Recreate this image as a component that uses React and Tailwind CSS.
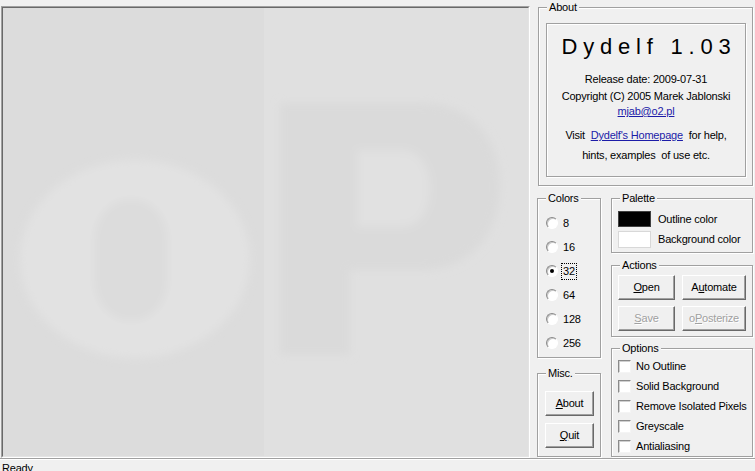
import clsx from 'clsx'

const font = "font-['Liberation_Sans',Arial,sans-serif]"

function GroupBox({ title, className, children }) {
  return (
    <div className={clsx('relative border border-[#a0a0a0] shadow-[1px_1px_0_#fff,inset_1px_1px_0_#fff]', className)}>
      <span className="absolute -top-[7px] left-[8px] px-[2px] bg-[#f0f0f0] leading-[13px]">{title}</span>
      {children}
    </div>
  )
}

function Button({ children, disabled, className }) {
  return (
    <div
      className={clsx(
        'flex items-center justify-center border border-t-white border-l-white border-r-[#696969] border-b-[#696969] shadow-[inset_-1px_-1px_0_#a0a0a0]',
        disabled ? 'text-[#a0a0a0] [text-shadow:1px_1px_0_#fff]' : 'text-black',
        className
      )}
    >
      {children}
    </div>
  )
}

function Key({ children }) {
  return <span className="underline underline-offset-[1px]">{children}</span>
}

function Radio({ label, checked }) {
  return (
    <div className="flex h-[24px] items-center gap-[5px] pl-[8px]">
      <span className="relative flex h-[12px] w-[12px] items-center justify-center rounded-full border border-t-[#8a8a8a] border-l-[#8a8a8a] border-r-white border-b-white bg-white shadow-[inset_1px_1px_0_#c8c8c8]">
        {checked && <span className="h-[4px] w-[4px] rounded-full bg-black" />}
      </span>
      <span className={clsx('leading-[13px]', checked && 'outline-1 outline-dotted outline-black outline-offset-[1px]')}>
        {label}
      </span>
    </div>
  )
}

function Check({ label }) {
  return (
    <div className="flex h-[20px] items-center gap-[5px] pl-[6px]">
      <span className="h-[13px] w-[13px] border border-t-[#8a8a8a] border-l-[#8a8a8a] border-r-[#f4f4f4] border-b-[#f4f4f4] bg-white shadow-[inset_1px_1px_0_#d0d0d0]" />
      <span className="leading-[13px]">{label}</span>
    </div>
  )
}

// preview of the posterized image: faint "oP" letters on two tinted halves
function Canvas() {
  return (
    <div className="h-[452px] w-[529px] border border-t-[#a0a0a0] border-l-[#a0a0a0] border-r-white border-b-white">
      <div className="h-full w-full border border-t-[#696969] border-l-[#696969] border-r-[#e3e3e3] border-b-[#e3e3e3]">
        <svg width="525" height="448" viewBox="0 0 525 448" className="block">
          <defs>
            <filter id="soft" x="-20%" y="-20%" width="140%" height="140%">
              <feGaussianBlur stdDeviation="4" />
            </filter>
          </defs>
          <rect x="0" y="0" width="261" height="448" fill="#dcdcdc" />
          <rect x="261" y="0" width="264" height="448" fill="#e0e0e0" />
          <g filter="url(#soft)">
            <ellipse cx="132" cy="251" rx="115" ry="99" fill="#e2e2e2" />
            <rect x="92" y="192" width="72" height="120" rx="34" ry="40" fill="#dcdcdc" />
          </g>
          <g filter="url(#soft)">
            <path d="M277 95 H420 C468 95 497 130 497 178 C497 228 466 262 420 262 H347 V347 H277 Z" fill="#dadada" />
            <path d="M354 142 H398 C418 142 427 160 427 180 C427 201 418 219 398 219 H354 Z" fill="#e1e1e1" />
          </g>
        </svg>
      </div>
    </div>
  )
}

export default function App() {
  return (
    <div className={clsx('flex h-[471px] w-[755px] flex-col overflow-hidden bg-[#f0f0f0] text-[11px] tracking-[-0.2px] text-black', font)}>
      <div className="flex h-[460px]">
        <div className="pl-[1px] pt-[6px]">
          <Canvas />
        </div>

        <div className="ml-[7px] flex w-[216px] flex-col">
          {/* about */}
          <GroupBox title="About" className="ml-[1px] mt-[7px] h-[179px] w-[215px]">
            <div className="ml-[7px] mt-[15px] flex h-[154px] w-[200px] flex-col items-center border border-[#a0a0a0] shadow-[inset_1px_1px_0_#fff,1px_1px_0_#fff]">
              <div className="mt-[10px] pl-[6px] text-[22px] leading-[26px] tracking-[5.8px]">Dydelf 1.03</div>
              <div className="mt-[13px] leading-[13px]">Release date: 2009-07-31</div>
              <div className="mt-[4px] leading-[13px]">Copyright (C) 2005 Marek Jablonski</div>
              <div className="mt-[2px] leading-[13px] text-[#1c1ca8] underline underline-offset-[1px]">mjab@o2.pl</div>
              <div className="mt-[11px] whitespace-pre leading-[13px]">
                {'Visit  '}
                <span className="text-[#1c1ca8] underline underline-offset-[1px]">Dydelf's Homepage</span>
                {'  for help,'}
              </div>
              <div className="mt-[7px] whitespace-pre leading-[13px]">{'hints, examples  of use etc.'}</div>
            </div>
          </GroupBox>

          <div className="mt-[12px] flex gap-[10px]">
            <div className="flex w-[64px] flex-col">
              <GroupBox title="Colors" className="h-[160px]">
                <div className="flex flex-col pt-[12px]">
                  <Radio label="8" />
                  <Radio label="16" />
                  <Radio label="32" checked />
                  <Radio label="64" />
                  <Radio label="128" />
                  <Radio label="256" />
                </div>
              </GroupBox>

              <GroupBox title="Misc." className="mt-[15px] h-[84px]">
                <div className="flex flex-col gap-[7px] pl-[7px] pt-[17px]">
                  <Button className="h-[25px] w-[49px]"><span><Key>A</Key>bout</span></Button>
                  <Button className="h-[25px] w-[49px]"><span><Key>Q</Key>uit</span></Button>
                </div>
              </GroupBox>
            </div>

            <div className="flex w-[142px] flex-col">
              <GroupBox title="Palette" className="h-[55px]">
                <div className="flex flex-col gap-[4px] px-[6px] pt-[12px]">
                  <div className="flex items-center gap-[7px]">
                    <span className="h-[16px] w-[33px] border border-[#404040] bg-black" />
                    <span className="leading-[13px]">Outline color</span>
                  </div>
                  <div className="flex items-center gap-[7px]">
                    <span className="h-[17px] w-[33px] border border-[#d8d8d8] bg-white" />
                    <span className="leading-[13px]">Background color</span>
                  </div>
                </div>
              </GroupBox>

              <GroupBox title="Actions" className="mt-[12px] h-[72px]">
                <div className="grid grid-cols-[57px_64px] gap-x-[7px] gap-y-[6px] pl-[6px] pt-[9px]">
                  <Button className="h-[25px]"><span><Key>O</Key>pen</span></Button>
                  <Button className="h-[25px]"><span>A<Key>u</Key>tomate</span></Button>
                  <Button disabled className="h-[25px]"><span><Key>S</Key>ave</span></Button>
                  <Button disabled className="h-[25px]"><span>o<Key>P</Key>osterize</span></Button>
                </div>
              </GroupBox>

              <GroupBox title="Options" className="mt-[11px] h-[109px]">
                <div className="flex flex-col pt-[7px]">
                  <Check label="No Outline" />
                  <Check label="Solid Background" />
                  <Check label="Remove Isolated Pixels" />
                  <Check label="Greyscale" />
                  <Check label="Antialiasing" />
                </div>
              </GroupBox>
            </div>
          </div>
        </div>
      </div>

      {/* status bar */}
      <div className="flex-1 border-t border-[#a0a0a0] pl-[2px] pt-[3px] leading-[13px] shadow-[inset_0_1px_0_#fff]">
        Ready
      </div>
    </div>
  )
}
